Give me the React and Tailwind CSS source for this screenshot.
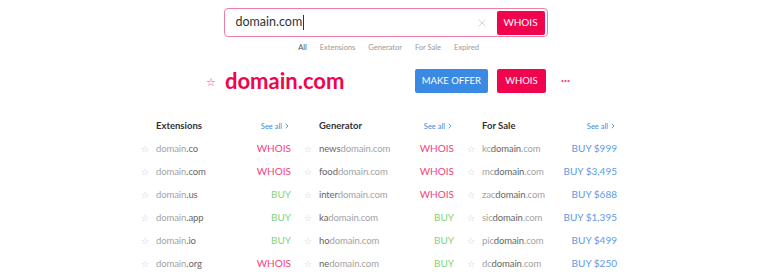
import { X, ChevronRight } from 'lucide-react';

const font = { fontFamily: 'Lato, "Open Sans", sans-serif' };

const columns = [
    {
        title: 'Extensions',
        rows: [
            { parts: [['domain', 0], ['.co', 1]], action: 'WHOIS', kind: 'whois' },
            { parts: [['domain', 0], ['.com', 1]], action: 'WHOIS', kind: 'whois' },
            { parts: [['domain', 0], ['.us', 1]], action: 'BUY', kind: 'buy' },
            { parts: [['domain', 0], ['.app', 1]], action: 'BUY', kind: 'buy' },
            { parts: [['domain', 0], ['.io', 1]], action: 'BUY', kind: 'buy' },
            { parts: [['domain', 0], ['.org', 1]], action: 'WHOIS', kind: 'whois' },
        ],
    },
    {
        title: 'Generator',
        rows: [
            { parts: [['news', 1], ['domain.com', 0]], action: 'WHOIS', kind: 'whois' },
            { parts: [['food', 1], ['domain.com', 0]], action: 'WHOIS', kind: 'whois' },
            { parts: [['inter', 1], ['domain.com', 0]], action: 'WHOIS', kind: 'whois' },
            { parts: [['ka', 1], ['domain.com', 0]], action: 'BUY', kind: 'buy' },
            { parts: [['ho', 1], ['domain.com', 0]], action: 'BUY', kind: 'buy' },
            { parts: [['ne', 1], ['domain.com', 0]], action: 'BUY', kind: 'buy' },
        ],
    },
    {
        title: 'For Sale',
        rows: [
            { parts: [['kc', 0], ['domain', 1], ['.com', 0]], action: 'BUY $999', kind: 'price' },
            { parts: [['mc', 0], ['domain', 1], ['.com', 0]], action: 'BUY $3,495', kind: 'price' },
            { parts: [['zac', 0], ['domain', 1], ['.com', 0]], action: 'BUY $688', kind: 'price' },
            { parts: [['sic', 0], ['domain', 1], ['.com', 0]], action: 'BUY $1,395', kind: 'price' },
            { parts: [['pic', 0], ['domain', 1], ['.com', 0]], action: 'BUY $499', kind: 'price' },
            { parts: [['dc', 0], ['domain', 1], ['.com', 0]], action: 'BUY $250', kind: 'price' },
        ],
    },
];

const actionColor = {
    whois: 'text-[#f5417a]',
    buy: 'text-[#7fd47a]',
    price: 'text-[#5b9be6]',
};

const App = () => {
    return (
        <div className="w-[768px] h-[280px] bg-white overflow-hidden" style={font}>
            {/* Search */}
            <div className="pt-[8px] flex justify-center">
                <div className="w-[324px] h-[29px] ml-[3px] border-[1.5px] border-[#f27da2] rounded-[4px] flex items-center pl-[11px] pr-[2px]">
                    <span className="text-[12.5px] text-[#333] leading-none">domain.com</span>
                    <span className="w-px h-[15px] bg-[#333] ml-[1px]" />
                    <X className="ml-auto mr-[9px] w-[12px] h-[12px] text-[#c4c4c4]" strokeWidth={1.5} />
                    <button className="w-[48px] h-[24px] bg-[#f0044d] text-white text-[10px] rounded-[2px]">
                        WHOIS
                    </button>
                </div>
            </div>
            <div className="mt-[5px] flex justify-center gap-[13px] text-[7.5px] text-[#999] ml-[9px]">
                <span className="text-[#555]">All</span>
                <span>Extensions</span>
                <span>Generator</span>
                <span>For Sale</span>
                <span>Expired</span>
            </div>

            {/* Heading */}
            <div className="mt-[16px] flex items-center h-[24px]">
                <span className="ml-[206px] text-[11px] text-[#f0487c] leading-none">☆</span>
                <span className="ml-[9px] text-[22px] font-bold text-[#f0044d] leading-none">domain.com</span>
                <button className="ml-auto w-[73px] h-[24px] bg-[#3a8ae3] text-white text-[9.5px] rounded-[2px]">
                    MAKE OFFER
                </button>
                <button className="ml-[9px] w-[49px] h-[24px] bg-[#f0044d] text-white text-[9.5px] rounded-[2px]">
                    WHOIS
                </button>
                <span className="ml-[15px] mr-[198px] text-[11px] font-bold text-[#f0487c] leading-none -mt-[4px]">···</span>
            </div>

            {/* Columns */}
            <div className="mt-[22px] ml-[137px] grid grid-cols-[163px_163px_163px]">
                {columns.map((col) => (
                    <div key={col.title} className="pl-[4px] pr-[9px]">
                        <div className="h-[22px] flex items-center pl-[15px]">
                            <span className="text-[9.5px] font-bold text-[#333]">{col.title}</span>
                            <span className="ml-auto flex items-center text-[7.5px] text-[#3a8ae3]">
                                See all
                                <ChevronRight className="w-[8px] h-[8px] ml-[1px]" strokeWidth={2.5} />
                            </span>
                        </div>
                        {col.rows.map((row, i) => (
                            <div key={i} className="h-[23px] flex items-center">
                                <span className="w-[15px] text-[9px] text-[#ccc] leading-none">☆</span>
                                <span className="text-[9.5px] tracking-[-0.1px]">
                                    {row.parts.map(([t, strong], j) => (
                                        <span key={j} className={strong ? 'text-[#666]' : 'text-[#a3a3a3]'}>
                                            {t}
                                        </span>
                                    ))}
                                </span>
                                <span className={`ml-auto text-[10px] ${actionColor[row.kind]}`}>{row.action}</span>
                            </div>
                        ))}
                    </div>
                ))}
            </div>
        </div>
    );
};

export default App;
